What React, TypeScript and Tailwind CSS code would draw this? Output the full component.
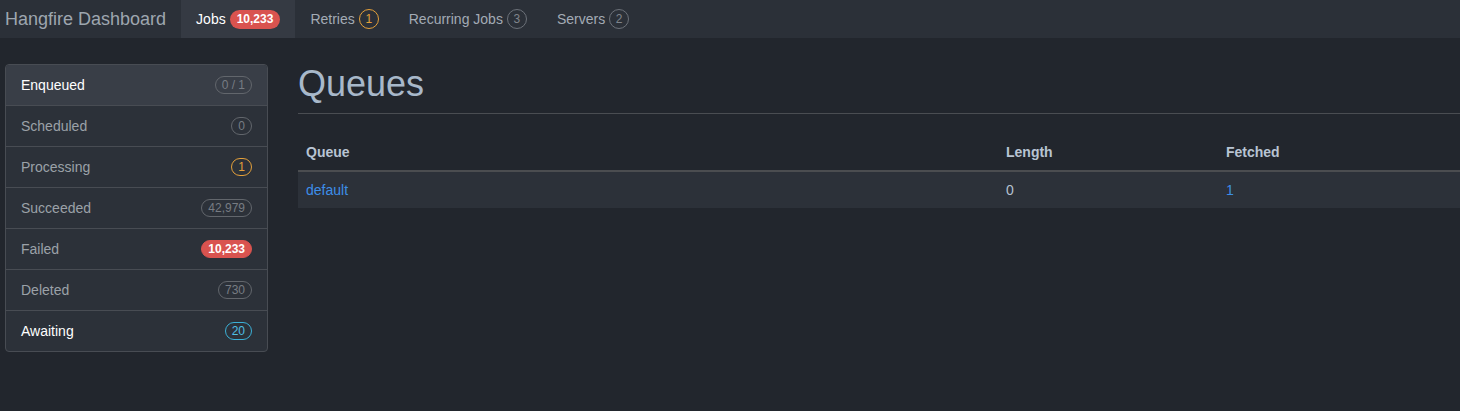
import React from "react";

const font = { fontFamily: '"Liberation Sans", Arial, sans-serif' };

function NavBadge({ kind, children }: { kind: "red" | "orange" | "gray"; children: React.ReactNode }) {
  if (kind === "red")
    return (
      <span className="ml-1 inline-flex h-[19px] items-center rounded-full bg-[#d9534f] px-[7px] text-[12px] font-bold leading-none text-white">
        {children}
      </span>
    );
  if (kind === "orange")
    return (
      <span className="ml-1 inline-flex h-[20px] min-w-[20px] items-center justify-center rounded-full border border-[#e4a03a] px-[5px] text-[12px] leading-none text-[#e4a03a]">
        {children}
      </span>
    );
  return (
    <span className="ml-1 inline-flex h-[20px] min-w-[20px] items-center justify-center rounded-full border border-[#6c7179] px-[5px] text-[12px] leading-none text-[#80858c]">
      {children}
    </span>
  );
}

function SideBadge({ kind, children }: { kind: "gray" | "orange" | "red" | "blue"; children: React.ReactNode }) {
  const cls =
    kind === "red"
      ? "bg-[#d9534f] border-[#d9534f] text-white font-bold"
      : kind === "orange"
      ? "border-[#e4a03a] text-[#e4a03a]"
      : kind === "blue"
      ? "border-[#3bb0d6] text-[#4fbfe3]"
      : "border-[#62666c] text-[#777c83]";
  return (
    <span
      className={`inline-flex h-[18px] min-w-[18px] items-center justify-center rounded-full border px-[6px] text-[12px] leading-none ${cls}`}
    >
      {children}
    </span>
  );
}

const items: { label: string; badge: string; kind: "gray" | "orange" | "red" | "blue"; active?: boolean; bright?: boolean }[] = [
  { label: "Enqueued", badge: "0 / 1", kind: "gray", active: true, bright: true },
  { label: "Scheduled", badge: "0", kind: "gray" },
  { label: "Processing", badge: "1", kind: "orange" },
  { label: "Succeeded", badge: "42,979", kind: "gray" },
  { label: "Failed", badge: "10,233", kind: "red" },
  { label: "Deleted", badge: "730", kind: "gray" },
  { label: "Awaiting", badge: "20", kind: "blue", bright: true },
];

export default function App() {
  return (
    <div className="min-h-[411px] w-full overflow-hidden bg-[#22262d]" style={font}>
      <nav className="flex h-[38px] items-stretch bg-[#2b3038]">
        <div className="flex items-center pl-[5px] pr-[15px] text-[18px] text-[#9ea6af]">Hangfire Dashboard</div>
        <div className="flex items-center bg-[#353a43] px-[15px] text-[14px] text-white">
          Jobs <NavBadge kind="red">10,233</NavBadge>
        </div>
        <div className="flex items-center px-[15px] text-[14px] text-[#a3abb5]">
          Retries <NavBadge kind="orange">1</NavBadge>
        </div>
        <div className="flex items-center px-[15px] text-[14px] text-[#a3abb5]">
          Recurring Jobs <NavBadge kind="gray">3</NavBadge>
        </div>
        <div className="flex items-center px-[15px] text-[14px] text-[#a3abb5]">
          Servers <NavBadge kind="gray">2</NavBadge>
        </div>
      </nav>

      <div className="flex gap-[30px] pl-[5px] pt-[26px]">
        <div className="w-[263px] shrink-0">
          <div className="overflow-hidden rounded-[4px] border border-[#484c53] bg-[#2c3139]">
            {items.map((it, i) => (
              <div
                key={it.label}
                className={`flex items-center justify-between px-[15px] text-[14px] ${
                  i > 0 ? "h-[41px] border-t border-[#484c53]" : "h-[40px]"
                } ${it.active ? "bg-[#393e47]" : ""} ${it.bright ? "text-white" : "text-[#9ba1a8]"}`}
              >
                <span>{it.label}</span>
                <SideBadge kind={it.kind}>{it.badge}</SideBadge>
              </div>
            ))}
          </div>
        </div>

        <div className="min-w-0 flex-1">
          <h1 className="border-b border-[#4a4d52] pb-[9px] text-[36px] font-normal leading-[1.1] text-[#a8b8ca]">
            Queues
          </h1>
          <table className="mt-[20px] w-full border-collapse text-[14px]">
            <thead>
              <tr className="border-b-2 border-[#4b4d50]">
                <th className="w-[700px] px-[8px] py-[8px] text-left font-bold leading-[20px] text-[#b8c4d3]">Queue</th>
                <th className="w-[220px] px-[8px] py-[8px] text-left font-bold leading-[20px] text-[#b8c4d3]">Length</th>
                <th className="px-[8px] py-[8px] text-left font-bold leading-[20px] text-[#b8c4d3]">Fetched</th>
              </tr>
            </thead>
            <tbody>
              <tr className="bg-[#2c3139]">
                <td className="px-[8px] py-[8px] leading-[20px] text-[#3d8ee8]">default</td>
                <td className="px-[8px] py-[8px] leading-[20px] text-[#b4c1d1]">0</td>
                <td className="px-[8px] py-[8px] leading-[20px] text-[#3d8ee8]">1</td>
              </tr>
            </tbody>
          </table>
        </div>
      </div>
    </div>
  );
}
